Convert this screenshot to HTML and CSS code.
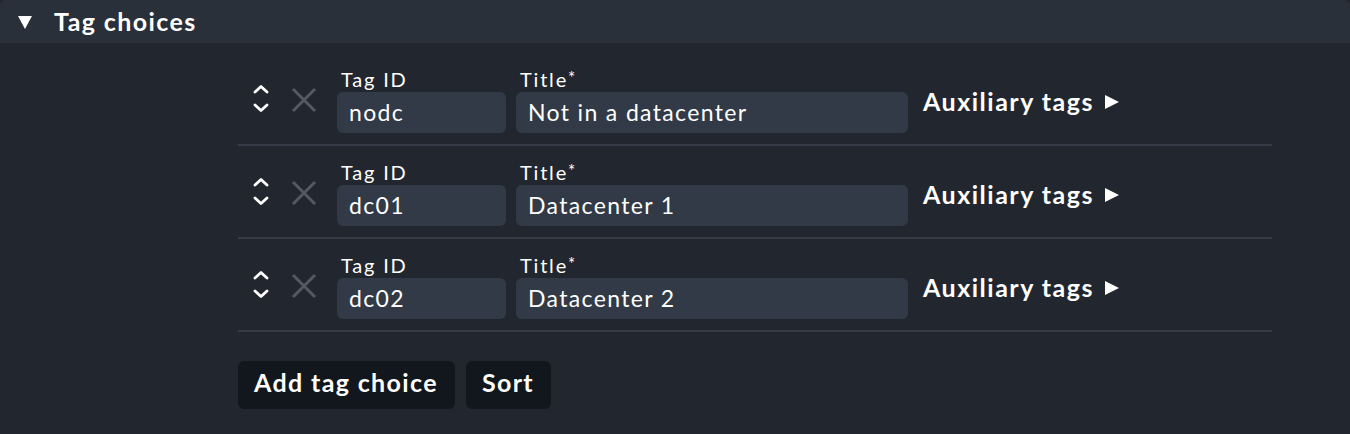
FILE: index.html
```html
<!DOCTYPE html>
<html>
<head>
<meta charset="utf-8">
<link rel="stylesheet" href="styles.css">
</head>
<body>
<div class="panel">
  <div class="head">
    <span class="caret"></span>
    <span class="head-title">Tag choices</span>
  </div>
  <div class="content">
    <div class="list">
      <div class="row">
        <div class="mover">
          <svg width="16" height="30" viewBox="0 0 16 30"><path d="M2 7 L8 1.5 L14 7" fill="none" stroke="#fff" stroke-width="2.8" stroke-linecap="round" stroke-linejoin="round"/><path d="M2 20 L8 25.5 L14 20" fill="none" stroke="#fff" stroke-width="2.8" stroke-linecap="round" stroke-linejoin="round"/></svg>
        </div>
        <div class="del">
          <svg width="26" height="26" viewBox="0 0 26 26"><path d="M2 2 L24 24 M24 2 L2 24" stroke="#525963" stroke-width="3" stroke-linecap="butt"/></svg>
        </div>
        <div class="field id"><div class="lbl">Tag ID</div><div class="inp">nodc</div></div>
        <div class="field title"><div class="lbl">Title<span class="star">*</span></div><div class="inp">Not in a datacenter</div></div>
        <div class="aux">Auxiliary tags <span class="tri"></span></div>
      </div>
      <div class="row">
        <div class="mover">
          <svg width="16" height="30" viewBox="0 0 16 30"><path d="M2 7 L8 1.5 L14 7" fill="none" stroke="#fff" stroke-width="2.8" stroke-linecap="round" stroke-linejoin="round"/><path d="M2 20 L8 25.5 L14 20" fill="none" stroke="#fff" stroke-width="2.8" stroke-linecap="round" stroke-linejoin="round"/></svg>
        </div>
        <div class="del">
          <svg width="26" height="26" viewBox="0 0 26 26"><path d="M2 2 L24 24 M24 2 L2 24" stroke="#525963" stroke-width="3" stroke-linecap="butt"/></svg>
        </div>
        <div class="field id"><div class="lbl">Tag ID</div><div class="inp">dc01</div></div>
        <div class="field title"><div class="lbl">Title<span class="star">*</span></div><div class="inp">Datacenter 1</div></div>
        <div class="aux">Auxiliary tags <span class="tri"></span></div>
      </div>
      <div class="row">
        <div class="mover">
          <svg width="16" height="30" viewBox="0 0 16 30"><path d="M2 7 L8 1.5 L14 7" fill="none" stroke="#fff" stroke-width="2.8" stroke-linecap="round" stroke-linejoin="round"/><path d="M2 20 L8 25.5 L14 20" fill="none" stroke="#fff" stroke-width="2.8" stroke-linecap="round" stroke-linejoin="round"/></svg>
        </div>
        <div class="del">
          <svg width="26" height="26" viewBox="0 0 26 26"><path d="M2 2 L24 24 M24 2 L2 24" stroke="#525963" stroke-width="3" stroke-linecap="butt"/></svg>
        </div>
        <div class="field id"><div class="lbl">Tag ID</div><div class="inp">dc02</div></div>
        <div class="field title"><div class="lbl">Title<span class="star">*</span></div><div class="inp">Datacenter 2</div></div>
        <div class="aux">Auxiliary tags <span class="tri"></span></div>
      </div>
    </div>
    <div class="buttons">
      <div class="btn">Add tag choice</div>
      <div class="btn">Sort</div>
    </div>
  </div>
</div>
</body>
</html>
```
FILE: styles.css
```css
html, body {
  margin: 0;
  padding: 0;
  background: #22272f;
}
body {
  font-family: Lato, "Noto Sans", sans-serif;
  color: #ffffff;
  width: 1350px;
  height: 434px;
  overflow: hidden;
}
.panel {
  background: #22272f;
  border-radius: 6px 6px 0 0;
}
.head {
  height: 43px;
  background: #29303a;
  display: flex;
  align-items: center;
  border-radius: 6px 6px 0 0;
}
.caret {
  width: 0;
  height: 0;
  margin-left: 18px;
  margin-top: 1px;
  border-left: 7.5px solid transparent;
  border-right: 7.5px solid transparent;
  border-top: 13px solid #fff;
}
.head-title {
  margin-left: 22px;
  font-size: 25px;
  line-height: 30px;
  font-weight: bold;
  letter-spacing: 1.4px;
  margin-top: -2px;
}
.content {
  padding: 10px 0 0 238px;
  width: 1034px;
}
.row {
  display: flex;
  align-items: flex-start;
  padding: 15px 0 11px 0;
  border-bottom: 2px solid #353c48;
  height: 65px;
}
.mover {
  width: 16px;
  margin-left: 15px;
  margin-top: 17px;
  height: 30px;
}
.del {
  margin-left: 22px;
  margin-top: 19px;
  width: 26px;
  height: 26px;
}
.field {
  display: flex;
  flex-direction: column;
}
.field.id {
  margin-left: 20px;
  width: 169px;
}
.field.title {
  margin-left: 10px;
  width: 392px;
}
.lbl {
  font-size: 20px;
  line-height: 22px;
  height: 22px;
  letter-spacing: 1.8px;
  padding-left: 4px;
  margin-bottom: 2px;
  white-space: nowrap;
}
.star {
  font-size: 17px;
  position: relative;
  top: -3px;
  letter-spacing: 0;
}
.inp {
  height: 41px;
  background: #313a46;
  border-radius: 6px;
  font-size: 23px;
  line-height: 41px;
  padding-left: 12px;
  letter-spacing: 1.35px;
  box-sizing: border-box;
  white-space: nowrap;
}
.aux {
  margin-left: 15px;
  margin-top: 18px;
  font-size: 25px;
  font-weight: bold;
  letter-spacing: 1.5px;
  display: flex;
  align-items: center;
  line-height: 30px;
  white-space: nowrap;
}
.tri {
  display: inline-block;
  width: 0;
  height: 0;
  margin-left: 11px;
  margin-top: 2px;
  border-top: 7.5px solid transparent;
  border-bottom: 7.5px solid transparent;
  border-left: 14px solid #fff;
}
.buttons {
  display: flex;
  gap: 11px;
  margin-top: 29px;
}
.btn {
  height: 48px;
  box-sizing: border-box;
  line-height: 43px;
  padding: 0 17px 5px 16px;
  background: #12171d;
  border-radius: 6px;
  font-size: 25px;
  font-weight: bold;
  letter-spacing: 1.36px;
  white-space: nowrap;
}
```
